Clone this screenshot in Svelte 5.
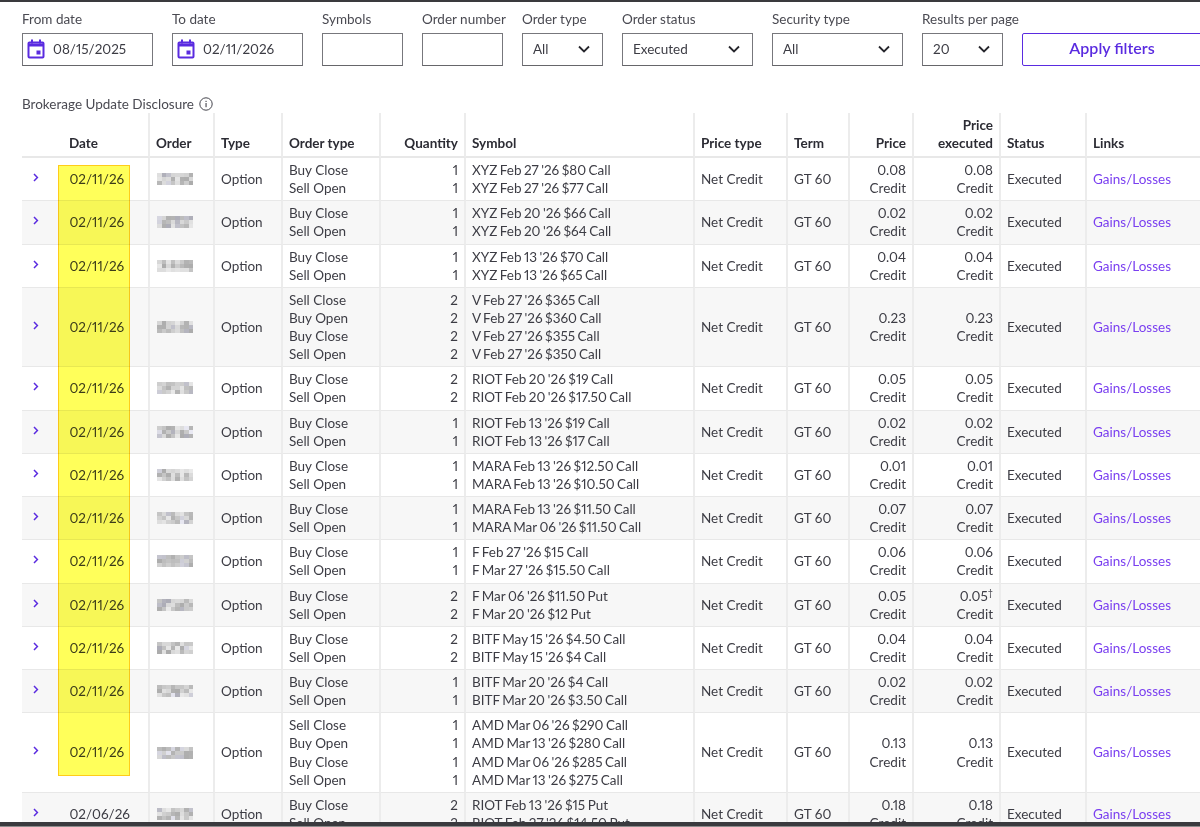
<script>
	const filters = [
		{ label: 'From date', kind: 'date', value: '08/15/2025', cls: 'w-date' },
		{ label: 'To date', kind: 'date', value: '02/11/2026', cls: 'w-date' },
		{ label: 'Symbols', kind: 'text', cls: 'w-short' },
		{ label: 'Order number', kind: 'text', cls: 'w-short' },
		{ label: 'Order type', kind: 'select', value: 'All', cls: 'w-short' },
		{ label: 'Order status', kind: 'select', value: 'Executed', cls: 'w-wide' },
		{ label: 'Security type', kind: 'select', value: 'All', cls: 'w-wide' },
		{ label: 'Results per page', kind: 'select', value: '20', cls: 'w-short' }
	];

	const rows = [
		{ date: '02/11/26', price: '0.08', exec: '0.08', legs: [['Buy Close', 1, "XYZ Feb 27 '26 $80 Call"], ['Sell Open', 1, "XYZ Feb 27 '26 $77 Call"]] },
		{ date: '02/11/26', price: '0.02', exec: '0.02', legs: [['Buy Close', 1, "XYZ Feb 20 '26 $66 Call"], ['Sell Open', 1, "XYZ Feb 20 '26 $64 Call"]] },
		{ date: '02/11/26', price: '0.04', exec: '0.04', legs: [['Buy Close', 1, "XYZ Feb 13 '26 $70 Call"], ['Sell Open', 1, "XYZ Feb 13 '26 $65 Call"]] },
		{ date: '02/11/26', price: '0.23', exec: '0.23', legs: [['Sell Close', 2, "V Feb 27 '26 $365 Call"], ['Buy Open', 2, "V Feb 27 '26 $360 Call"], ['Buy Close', 2, "V Feb 27 '26 $355 Call"], ['Sell Open', 2, "V Feb 27 '26 $350 Call"]] },
		{ date: '02/11/26', price: '0.05', exec: '0.05', legs: [['Buy Close', 2, "RIOT Feb 20 '26 $19 Call"], ['Sell Open', 2, "RIOT Feb 20 '26 $17.50 Call"]] },
		{ date: '02/11/26', price: '0.02', exec: '0.02', legs: [['Buy Close', 1, "RIOT Feb 13 '26 $19 Call"], ['Sell Open', 1, "RIOT Feb 13 '26 $17 Call"]] },
		{ date: '02/11/26', price: '0.01', exec: '0.01', legs: [['Buy Close', 1, "MARA Feb 13 '26 $12.50 Call"], ['Sell Open', 1, "MARA Feb 13 '26 $10.50 Call"]] },
		{ date: '02/11/26', price: '0.07', exec: '0.07', legs: [['Buy Close', 1, "MARA Feb 13 '26 $11.50 Call"], ['Sell Open', 1, "MARA Mar 06 '26 $11.50 Call"]] },
		{ date: '02/11/26', price: '0.06', exec: '0.06', legs: [['Buy Close', 1, "F Feb 27 '26 $15 Call"], ['Sell Open', 1, "F Mar 27 '26 $15.50 Call"]] },
		{ date: '02/11/26', price: '0.05', exec: '0.05', mark: true, legs: [['Buy Close', 2, "F Mar 06 '26 $11.50 Put"], ['Sell Open', 2, "F Mar 20 '26 $12 Put"]] },
		{ date: '02/11/26', price: '0.04', exec: '0.04', legs: [['Buy Close', 2, "BITF May 15 '26 $4.50 Call"], ['Sell Open', 2, "BITF May 15 '26 $4 Call"]] },
		{ date: '02/11/26', price: '0.02', exec: '0.02', legs: [['Buy Close', 1, "BITF Mar 20 '26 $4 Call"], ['Sell Open', 1, "BITF Mar 20 '26 $3.50 Call"]] },
		{ date: '02/11/26', price: '0.13', exec: '0.13', legs: [['Sell Close', 1, "AMD Mar 06 '26 $290 Call"], ['Buy Open', 1, "AMD Mar 13 '26 $280 Call"], ['Buy Close', 1, "AMD Mar 06 '26 $285 Call"], ['Sell Open', 1, "AMD Mar 13 '26 $275 Call"]] },
		{ date: '02/06/26', price: '0.18', exec: '0.18', legs: [['Buy Close', 2, "RIOT Feb 13 '26 $15 Put"], ['Sell Open', 2, "RIOT Feb 27 '26 $14.50 Put"]] }
	];

	// order numbers are smeared in the source, so build a grey mosaic per row
	function mosaic(seed) {
		const cells = [];
		let n = seed * 7919 + 13;
		for (let i = 0; i < 24; i++) {
			n = (n * 1103515245 + 12345) % 2147483648;
			const v = 172 + ((n >> 8) % 62);
			const tint = (n >> 16) % 6 === 0 ? 10 : 0;
			cells.push(`rgb(${v},${v},${v + tint})`);
		}
		return cells;
	}
</script>

<div class="page">
	<form class="filters" on:submit|preventDefault>
		{#each filters as f}
			<div class="field {f.cls}">
				<span class="label">{f.label}</span>
				<div class="control">
					{#if f.kind === 'date'}
						<svg class="cal" viewBox="0 0 18 20" width="18" height="20" aria-hidden="true">
							<path d="M2.5 3.5h13a1 1 0 0 1 1 1v13a1 1 0 0 1-1 1h-13a1 1 0 0 1-1-1v-13a1 1 0 0 1 1-1z" fill="none" stroke="#5a2be0" stroke-width="2" />
							<path d="M1.5 4.5h15v3h-15z" fill="#5a2be0" />
							<rect x="4" y="0.5" width="2" height="4" fill="#5a2be0" />
							<rect x="12" y="0.5" width="2" height="4" fill="#5a2be0" />
							<rect x="9.5" y="11.5" width="4" height="4" fill="#5a2be0" />
						</svg>
						<span class="val">{f.value}</span>
					{:else if f.kind === 'select'}
						<span class="val">{f.value}</span>
						<svg class="caret" viewBox="0 0 12 8" width="12" height="8" aria-hidden="true">
							<path d="M1 1.5l5 5 5-5" fill="none" stroke="#26262c" stroke-width="1.8" />
						</svg>
					{/if}
				</div>
			</div>
		{/each}
		<button class="apply" type="submit">Apply filters</button>
	</form>

	<div class="disclosure">
		Brokerage Update Disclosure
		<svg viewBox="0 0 14 14" width="14" height="14" aria-hidden="true">
			<circle cx="7" cy="7" r="6.2" fill="none" stroke="#44444c" stroke-width="1" />
			<rect x="6.5" y="6" width="1.1" height="4.2" fill="#44444c" />
			<rect x="6.5" y="3.8" width="1.1" height="1.2" fill="#44444c" />
		</svg>
	</div>

	<div class="table-wrap">
		<table>
			<colgroup>
				<col style="width:128px" />
				<col style="width:65px" />
				<col style="width:68px" />
				<col style="width:98px" />
				<col style="width:85px" />
				<col style="width:229px" />
				<col style="width:93px" />
				<col style="width:62px" />
				<col style="width:64px" />
				<col style="width:87px" />
				<col style="width:86px" />
				<col style="width:121px" />
			</colgroup>
			<thead>
				<tr>
					<th class="date-h">Date</th>
					<th>Order</th>
					<th>Type</th>
					<th>Order type</th>
					<th class="num">Quantity</th>
					<th>Symbol</th>
					<th>Price type</th>
					<th>Term</th>
					<th class="num">Price</th>
					<th class="num">Price<br />executed</th>
					<th>Status</th>
					<th>Links</th>
				</tr>
			</thead>
			<tbody>
				{#each rows as row, i}
					<tr>
						<td class="date-c">
							<svg class="chev" viewBox="0 0 6 9" width="6" height="9" aria-hidden="true">
								<path d="M1 1l3.4 3.5L1 8" fill="none" stroke="#5a2be0" stroke-width="1.5" />
							</svg>
							<span>{row.date}</span>
						</td>
						<td class="order">
							<div class="smear">
								{#each mosaic(i + 1) as c}
									<i style="background:{c}"></i>
								{/each}
							</div>
						</td>
						<td>Option</td>
						<td>{#each row.legs as leg}<div>{leg[0]}</div>{/each}</td>
						<td class="num">{#each row.legs as leg}<div>{leg[1]}</div>{/each}</td>
						<td class="sym">{#each row.legs as leg}<div>{leg[2]}</div>{/each}</td>
						<td>Net Credit</td>
						<td>GT 60</td>
						<td class="num"><div>{row.price}</div><div>Credit</div></td>
						<td class="num"><div>{row.exec}{#if row.mark}<sup>†</sup>{/if}</div><div>Credit</div></td>
						<td>Executed</td>
						<td><a href="#gains">Gains/Losses</a></td>
					</tr>
				{/each}
			</tbody>
		</table>
		<div class="highlight"></div>
	</div>
</div>

<style>
	:global(body) {
		margin: 0;
		overflow: hidden;
		background: #8c8c8c;
	}

	.page {
		height: 826px;
		box-sizing: border-box;
		background: #fff;
		border-top: 2px solid #3a3a3e;
		border-bottom: 4px solid #3a3a3e;
		padding: 9px 0 0 22px;
		overflow: hidden;
		font-family: Lato, 'Open Sans', sans-serif;
		font-size: 13.5px;
		font-variant-numeric: proportional-nums;
		color: #3c3c44;
	}

	.filters {
		display: flex;
		align-items: flex-end;
		gap: 19px;
		width: 1300px;
	}

	.field {
		display: flex;
		flex-direction: column;
		gap: 6px;
	}

	.w-date { width: 131px; }
	.w-short { width: 81px; }
	.w-wide { width: 131px; }

	.label {
		line-height: 16px;
		white-space: nowrap;
		color: #4a4a52;
	}

	.control {
		height: 32.5px;
		box-sizing: border-box;
		border: 1px solid #77777c;
		border-bottom-color: #66666a;
		display: flex;
		align-items: center;
		padding: 0 10px;
		justify-content: space-between;
	}

	.cal {
		margin-left: -6px;
		margin-right: 8px;
		flex: none;
	}

	.field .control:has(.cal) {
		justify-content: flex-start;
	}

	.caret {
		flex: none;
		margin-right: 2px;
	}

	.apply {
		width: 180px;
		height: 32.5px;
		padding: 0 0 3px;
		background: #fff;
		border: 1px solid #5a2be0;
		border-radius: 2px;
		color: #5a2be0;
		font: 600 16px Lato, 'Open Sans', sans-serif;
		cursor: pointer;
	}

	.disclosure {
		margin-top: 30.5px;
		display: flex;
		align-items: center;
		gap: 5px;
		line-height: 16px;
		color: #4a4a52;
	}

	.table-wrap {
		position: relative;
		margin-top: 1px;
	}

	table {
		border-collapse: separate;
		border-spacing: 0;
		table-layout: fixed;
		width: 1186px;
	}

	th {
		text-align: left;
		font-weight: 700;
		color: #2c2c34;
		vertical-align: bottom;
		line-height: 18px;
		padding: 3px 6px 4px 6px;
		height: 37px;
		border-right: 2px solid #ececec;
		border-bottom: 2px solid #e8e8e8;
		box-sizing: border-box;
	}

	td {
		line-height: 18.13px;
		padding: 3px 6px;
		border-right: 2px solid #ececec;
		border-bottom: 1px solid #e8e8e8;
		vertical-align: middle;
		white-space: nowrap;
	}

	th:last-child,
	td:last-child {
		border-right: none;
	}

	tbody tr:nth-child(even) td {
		background: #f7f7f7;
	}

	.num {
		text-align: right;
	}

	.sym {
		word-spacing: -1px;
	}

	.date-h {
		padding-left: 47px;
	}

	.date-c {
		padding-left: 11px;
	}

	.date-c span {
		margin-left: 27px;
	}

	.chev {
		vertical-align: 2px;
	}

	.order {
		padding-left: 7px;
	}

	.smear {
		display: grid;
		grid-template-columns: repeat(8, 4.5px);
		grid-auto-rows: 4px;
		width: 36px;
		filter: blur(0.5px);
	}

	.smear i {
		display: block;
	}

	a {
		color: #7a3ff0;
		text-decoration: none;
	}

	sup {
		font-size: 9px;
		line-height: 0;
	}

	.highlight {
		position: absolute;
		left: 36px;
		top: 52px;
		width: 72px;
		height: 611px;
		box-sizing: border-box;
		background: #ffff5a;
		border: 1px solid #ffcc1a;
		mix-blend-mode: multiply;
		pointer-events: none;
	}
</style>
